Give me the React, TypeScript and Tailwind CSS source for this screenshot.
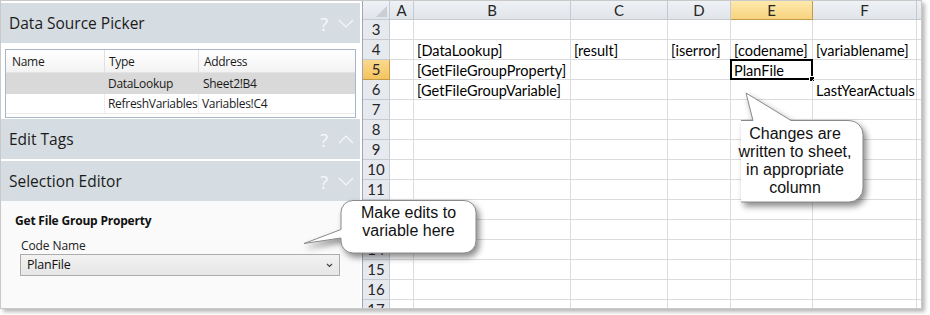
import React from 'react';

const cols = [
  { key: '#', w: 27 },
  { key: 'A', w: 24 },
  { key: 'B', w: 157 },
  { key: 'C', w: 97 },
  { key: 'D', w: 63 },
  { key: 'E', w: 82 },
  { key: 'F', w: 104 },
  { key: 'G', w: 40 },
];

const rows = [3, 4, 5, 6, 7, 8, 9, 10, 11, 12, 13, 14, 15, 16, 17];

const cells: Record<string, string> = {
  B4: '[DataLookup]',
  C4: '[result]',
  D4: '[iserror]',
  E4: '[codename]',
  F4: '[variablename]',
  B5: '[GetFileGroupProperty]',
  E5: 'PlanFile',
  B6: '[GetFileGroupVariable]',
  F6: 'LastYearActuals',
};

function Chevron({ up }: { up?: boolean }) {
  return (
    <svg width="16" height="9" viewBox="0 0 16 9" className="shrink-0">
      <polyline
        points={up ? '1,8 8,1 15,8' : '1,1 8,8 15,1'}
        fill="none"
        stroke="#f5f7f8"
        strokeWidth="1.2"
      />
    </svg>
  );
}

function PanelHeader({ title, up }: { title: string; up?: boolean }) {
  return (
    <div className="flex h-[40px] items-center bg-[#d5dce2] pl-[8px] pr-[6px]">
      <span className="pt-[2px] text-[15.5px] text-[#1b1b1b]">{title}</span>
      <span className="ml-auto mr-[10px] pt-[2px] text-[18px] text-[#f7f9fa]">?</span>
      <Chevron up={up} />
    </div>
  );
}

function SourceTable() {
  return (
    <div className="mx-[4px] mt-[6px] h-[69px] border border-[#a7b6c8] bg-white text-[12px] tracking-[-0.3px] text-[#1b1b1b]">
      <div className="flex h-[23px] items-center border-b border-[#e3e3e3] bg-gradient-to-b from-white to-[#f3f3f3]">
        <div className="h-full w-[99px] border-r border-[#e1e1e1] pl-[6px] leading-[23px]">Name</div>
        <div className="h-full w-[94px] border-r border-[#e1e1e1] pl-[4px] leading-[23px]">Type</div>
        <div className="h-full flex-1 pl-[5px] leading-[23px]">Address</div>
      </div>
      <div className="flex h-[21px] items-center bg-[#d9d9d9]">
        <div className="w-[99px]" />
        <div className="w-[94px] pl-[3px]">DataLookup</div>
        <div className="flex-1 pl-[4px]">Sheet2!B4</div>
      </div>
      <div className="flex h-[20px] items-center border-b border-[#ececec]">
        <div className="h-full w-[99px] border-r border-[#ececec]" />
        <div className="h-full w-[94px] whitespace-nowrap border-r border-[#ececec] pl-[3px] leading-[19px]">RefreshVariables</div>
        <div className="h-full flex-1 pl-[3px] leading-[19px]">Variables!C4</div>
      </div>
    </div>
  );
}

function LeftPanel() {
  return (
    <div className="flex w-[359px] shrink-0 flex-col pt-[2px] font-['Open_Sans',sans-serif]">
      <PanelHeader title="Data Source Picker" />
      <div className="h-[76px] bg-white">
        <SourceTable />
      </div>
      <PanelHeader title="Edit Tags" up />
      <div className="h-[2px] bg-white" />
      <PanelHeader title="Selection Editor" />
      <div className="flex-1 bg-[#fafafa] pl-[14px] pr-[20px] pt-[11px]">
        <div className="text-[12px] font-bold tracking-[-0.2px] text-[#111]">Get File Group Property</div>
        <div className="mt-[7px] pl-[6px] text-[12px] leading-[17px] tracking-[-0.1px] text-[#222]">Code Name</div>
        <div className="ml-[5px] flex h-[22px] items-center border border-[#acacac] bg-gradient-to-b from-[#f2f2f2] to-[#e6e6e6] pl-[6px] pr-[6px] text-[12.5px] tracking-[-0.2px] text-[#111]">
          PlanFile
          <svg width="7" height="5" viewBox="0 0 7 5" className="ml-auto">
            <polyline points="1,1 3.5,3.5 6,1" fill="none" stroke="#444" strokeWidth="1.2" />
          </svg>
        </div>
      </div>
    </div>
  );
}

function Sheet() {
  return (
    <div className="flex-1 overflow-hidden border-l border-[#9ea6b0] bg-white font-['Lato',sans-serif] text-[14.5px] text-black">
      <div className="flex h-[19px]">
        {cols.map((c, i) => {
          const active = c.key === 'E';
          return (
            <div
              key={c.key}
              style={{ width: c.w }}
              className={
                'relative shrink-0 border-b border-r text-center text-[15px] leading-[18px] text-[#262626] ' +
                (active
                  ? 'border-[#c29b47] bg-gradient-to-b from-[#fde9ab] to-[#f8d37f]'
                  : 'border-[#c4cad2] bg-gradient-to-b from-[#eef1f5] to-[#e1e5ea]')
              }
            >
              {i === 0 ? (
                <svg width="11" height="11" viewBox="0 0 11 11" className="absolute bottom-[2px] right-[2px]">
                  <polygon points="11,0 11,11 0,11" fill="#c9ced5" />
                </svg>
              ) : c.key === 'G' ? '' : c.key}
            </div>
          );
        })}
      </div>
      {rows.map((r) => (
        <div key={r} className="flex h-[20px]">
          {cols.map((c, i) => {
            if (i === 0) {
              const active = r === 5;
              return (
                <div
                  key={c.key}
                  style={{ width: c.w }}
                  className={
                    'shrink-0 border-b border-r text-center text-[15px] leading-[19px] text-[#262626] ' +
                    (active
                      ? 'border-[#c29b47] bg-gradient-to-b from-[#fbd98e] to-[#f4c35e]'
                      : 'border-[#c4cad2] bg-[#e6e9ee]')
                  }
                >
                  {r}
                </div>
              );
            }
            const id = `${c.key}${r}`;
            const selected = id === 'E5';
            return (
              <div
                key={c.key}
                style={{ width: c.w }}
                className="relative shrink-0 whitespace-nowrap border-b border-r border-[#dadcdf] pl-[3px] leading-[21px]"
              >
                {cells[id]}
                {selected && (
                  <div className="pointer-events-none absolute -left-[1px] -top-[1px] bottom-[-1px] right-[-1px] border-2 border-black">
                    <div className="absolute -bottom-[4px] -right-[4px] h-[6px] w-[6px] border border-white bg-black" />
                  </div>
                )}
              </div>
            );
          })}
        </div>
      ))}
    </div>
  );
}

function Callouts() {
  return (
    <>
      <div className="pointer-events-none absolute left-[300px] top-[196px]">
        <svg width="182" height="64" viewBox="300 196 182 64" className="drop-shadow-[3px_4px_3px_rgba(0,0,0,0.45)]">
          <path
            d="M352,199.5 H463 A12,12 0 0 1 475,211.5 V240 A12,12 0 0 1 463,252 H352 A12,12 0 0 1 340,240 V237 L303,242.5 L340,228.5 V211.5 A12,12 0 0 1 352,199.5 Z"
            fill="white"
            stroke="#8a8a8a"
            strokeWidth="1"
          />
        </svg>
        <div className="absolute left-[40px] top-[7px] w-[135px] text-center font-['Liberation_Sans',Arial,sans-serif] text-[16px] leading-[18px] text-[#111]">
          Make edits to
          <br />
          variable here
        </div>
      </div>
      <div className="pointer-events-none absolute left-[740px] top-[88px]">
        <svg width="130" height="122" viewBox="740 88 130 122" className="drop-shadow-[3px_4px_3px_rgba(0,0,0,0.45)]">
          <path
            d="M752,119.5 L745,92 L790,119.5 H848 A14,14 0 0 1 862,133.5 V187 A14,14 0 0 1 848,201 H740 A14,14 0 0 1 726,187 V133.5 A14,14 0 0 1 740,119.5 Z"
            fill="white"
            stroke="#8a8a8a"
            strokeWidth="1"
          />
        </svg>
      </div>
      <div className="pointer-events-none absolute left-[726px] top-[124px] w-[136px] text-center font-['Liberation_Sans',Arial,sans-serif] text-[16px] leading-[18px] text-[#111]">
        Changes are
        <br />
        written to sheet,
        <br />
        in appropriate
        <br />
        column
      </div>
    </>
  );
}

export default function App() {
  return (
    <div className="h-[315px] w-[930px] bg-white">
      <div className="relative flex h-[309px] w-[922px] overflow-visible border border-[#c9c9c9] bg-white shadow-[3px_3px_4px_rgba(0,0,0,0.28)]">
        <LeftPanel />
        <div className="w-[2px] shrink-0 bg-white" />
        <Sheet />
        <Callouts />
      </div>
    </div>
  );
}
